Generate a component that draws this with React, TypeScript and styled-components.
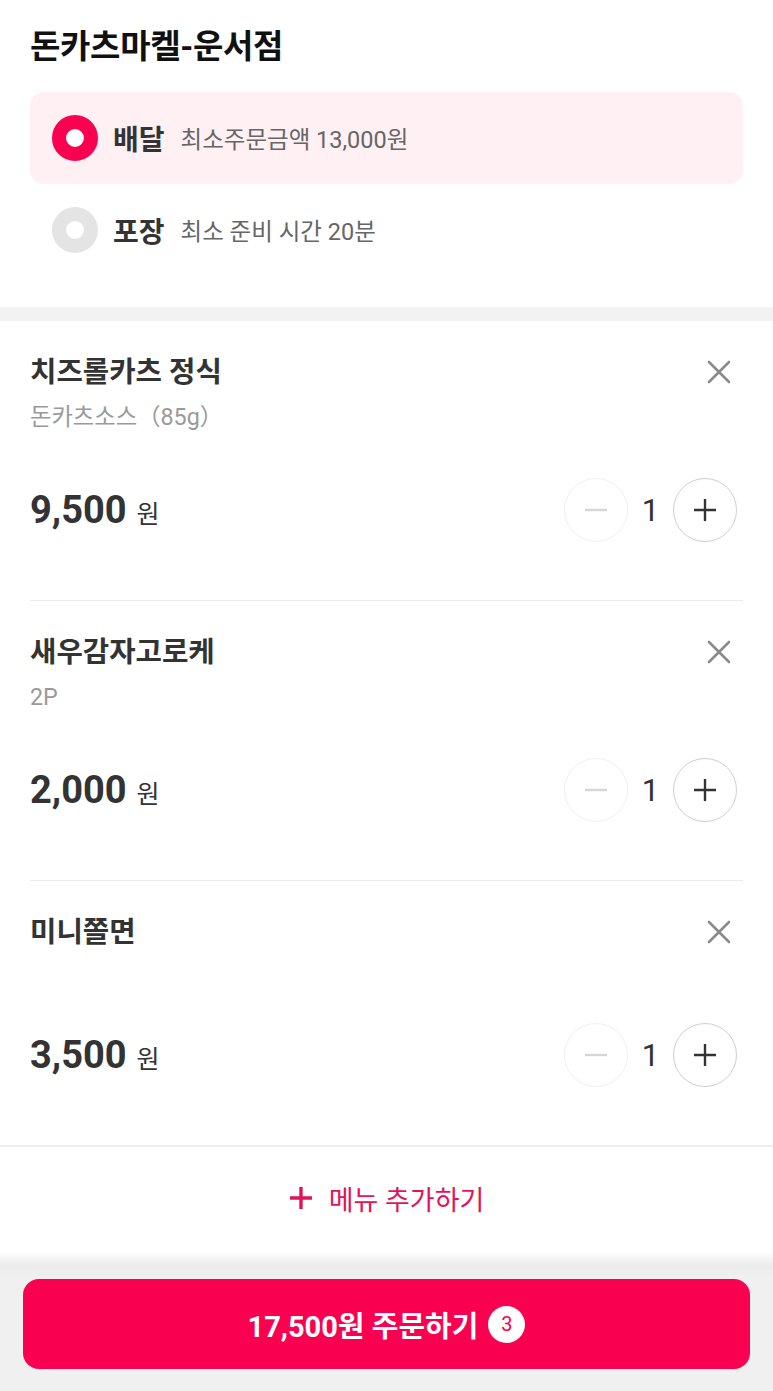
import React from "react";
import styled, { createGlobalStyle } from "styled-components";

const PINK = "#fa0050";

const Global = createGlobalStyle`
  html, body { margin: 0; padding: 0; background: #ffffff; }
  body { font-family: Roboto, "Noto Sans CJK KR", sans-serif; color: #333; }
  * { box-sizing: border-box; }
`;

const Page = styled.div`
  width: 773px;
  min-height: 1391px;
  display: flex;
  flex-direction: column;
  background: #fff;
`;

const StoreSection = styled.section`
  padding: 26px 30px 31px;
`;

const StoreTitle = styled.h1`
  margin: 0 0 25px;
  font-size: 33px;
  line-height: 41px;
  font-weight: 700;
  color: #111;
  letter-spacing: -0.3px;
`;

const OptionRow = styled.div<{ $active?: boolean }>`
  height: 92px;
  display: flex;
  align-items: center;
  padding-left: 22px;
  border-radius: 14px;
  background: ${(p) => (p.$active ? "#fff0f4" : "transparent")};
`;

const Radio = styled.span<{ $active?: boolean }>`
  width: 46px;
  height: 46px;
  border-radius: 50%;
  border: 14px solid ${(p) => (p.$active ? PINK : "#e4e4e4")};
  background: #fff;
  flex-shrink: 0;
`;

const OptionName = styled.span`
  margin-left: 15px;
  font-size: 28px;
  font-weight: 700;
  color: #333;
`;

const OptionDesc = styled.span`
  margin-left: 16px;
  font-size: 23.5px;
  color: #666;
`;

const Band = styled.div`
  height: 14px;
  background: #f2f2f2;
`;

const ItemList = styled.section`
  border-bottom: 2px solid #eeeeee;
`;

const Item = styled.div`
  margin: 0 30px;
  padding: 33px 0 58px;
  border-bottom: 1px solid #ececec;
  &:last-child { border-bottom: none; }
`;

const ItemHead = styled.div`
  min-height: 63px;
  display: flex;
  justify-content: space-between;
  align-items: flex-start;
`;

const ItemInfo = styled.div`
  display: flex;
  flex-direction: column;
`;

const ItemName = styled.div`
  font-size: 28.7px;
  line-height: 36px;
  font-weight: 700;
  color: #333;
`;

const ItemOption = styled.div`
  margin-top: 13px;
  font-size: 23.3px;
  line-height: 29px;
  color: #9a9a9a;
`;

const RemoveButton = styled.button`
  width: 24px;
  height: 24px;
  margin: 6px 12px 0 0;
  padding: 0;
  border: none;
  background: none;
  display: flex;
  align-items: center;
  justify-content: center;
`;

const PriceRow = styled.div`
  margin-top: 46px;
  height: 64px;
  display: flex;
  align-items: center;
  justify-content: space-between;
`;

const Price = styled.div`
  display: flex;
  align-items: baseline;
  gap: 10px;
`;

const PriceNum = styled.span`
  font-size: 38px;
  font-weight: 700;
  color: #333;
`;

const PriceUnit = styled.span`
  font-size: 25px;
  color: #333;
`;

const Stepper = styled.div`
  display: flex;
  align-items: center;
  margin-right: 6px;
`;

const StepButton = styled.button<{ $enabled?: boolean }>`
  width: 64px;
  height: 64px;
  border-radius: 50%;
  padding: 0;
  background: #fff;
  border: 1.5px solid ${(p) => (p.$enabled ? "#cfcfcf" : "#f0f0f0")};
  display: flex;
  align-items: center;
  justify-content: center;
`;

const Qty = styled.span`
  width: 45px;
  text-align: center;
  font-size: 31px;
  color: #333;
`;

const AddMenu = styled.button`
  height: 104px;
  width: 100%;
  border: none;
  background: #fff;
  display: flex;
  align-items: center;
  justify-content: center;
  gap: 16px;
  font-family: inherit;
  font-size: 27px;
  color: #e2135b;
  padding: 0 0 2px;
`;

const Footer = styled.div`
  flex: 1;
  padding: 28px 23px 23px;
  background: linear-gradient(#ffffff 0px, #ececec 14px, #ececec 16px, #f0f0f0 28px, #f0f0f0 100%);
`;

const OrderButton = styled.button`
  width: 100%;
  height: 90px;
  border: none;
  border-radius: 16px;
  background: ${PINK};
  display: flex;
  align-items: center;
  justify-content: center;
  gap: 10px;
  font-family: inherit;
  color: #fff;
  font-size: 29px;
  font-weight: 700;
`;

const Badge = styled.span`
  width: 37px;
  height: 37px;
  border-radius: 50%;
  background: #fff;
  color: ${PINK};
  font-size: 20px;
  font-weight: 400;
  display: flex;
  align-items: center;
  justify-content: center;
`;

const CloseIcon = () => (
  <svg width="24" height="24" viewBox="0 0 24 24">
    <path d="M2 2 L22 22 M22 2 L2 22" stroke="#8a8a8a" strokeWidth="2.6" strokeLinecap="round" />
  </svg>
);

const MinusIcon = () => (
  <svg width="24" height="24" viewBox="0 0 24 24">
    <path d="M1 12 H23" stroke="#d6d6d6" strokeWidth="2.4" />
  </svg>
);

const PlusIcon = ({ color = "#333", size = 24, w = 2.4 }: { color?: string; size?: number; w?: number }) => (
  <svg width={size} height={size} viewBox="0 0 24 24">
    <path d="M1 12 H23 M12 1 V23" stroke={color} strokeWidth={w} />
  </svg>
);

type CartItem = { name: string; option?: string; price: string };

const items: CartItem[] = [
  { name: "치즈롤카츠 정식", option: "돈카츠소스（85g）", price: "9,500" },
  { name: "새우감자고로케", option: "2P", price: "2,000" },
  { name: "미니쫄면", price: "3,500" },
];

export default function App() {
  return (
    <Page>
      <Global />
      <StoreSection>
        <StoreTitle>돈카츠마켈-운서점</StoreTitle>
        <OptionRow $active>
          <Radio $active />
          <OptionName>배달</OptionName>
          <OptionDesc>최소주문금액 13,000원</OptionDesc>
        </OptionRow>
        <OptionRow>
          <Radio />
          <OptionName>포장</OptionName>
          <OptionDesc>최소 준비 시간 20분</OptionDesc>
        </OptionRow>
      </StoreSection>
      <Band />
      <ItemList>
        {items.map((it) => (
          <Item key={it.name}>
            <ItemHead>
              <ItemInfo>
                <ItemName>{it.name}</ItemName>
                {it.option && <ItemOption>{it.option}</ItemOption>}
              </ItemInfo>
              <RemoveButton aria-label="삭제">
                <CloseIcon />
              </RemoveButton>
            </ItemHead>
            <PriceRow>
              <Price>
                <PriceNum>{it.price}</PriceNum>
                <PriceUnit>원</PriceUnit>
              </Price>
              <Stepper>
                <StepButton>
                  <MinusIcon />
                </StepButton>
                <Qty>1</Qty>
                <StepButton $enabled>
                  <PlusIcon />
                </StepButton>
              </Stepper>
            </PriceRow>
          </Item>
        ))}
      </ItemList>
      <AddMenu>
        <PlusIcon color="#e2135b" size={24} w={3.4} />
        메뉴 추가하기
      </AddMenu>
      <Footer>
        <OrderButton>
          17,500원 주문하기
          <Badge>3</Badge>
        </OrderButton>
      </Footer>
    </Page>
  );
}
